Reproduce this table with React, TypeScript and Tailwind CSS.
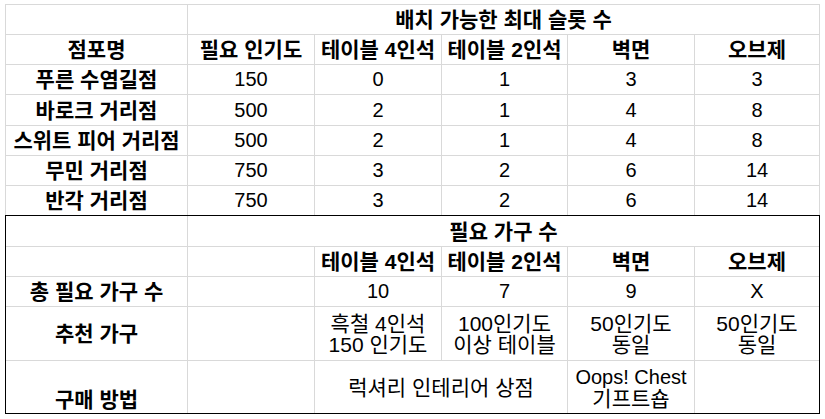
import type { ReactNode } from "react";

const COLS = "grid-cols-[181px_126px_126px_125px_126px_124px]";

const STORES = [
  { name: "푸른 수염길점", pop: 150, t4: 0, t2: 1, wall: 3, obj: 3 },
  { name: "바로크 거리점", pop: 500, t4: 2, t2: 1, wall: 4, obj: 8 },
  { name: "스위트 피어 거리점", pop: 500, t4: 2, t2: 1, wall: 4, obj: 8 },
  { name: "무민 거리점", pop: 750, t4: 3, t2: 2, wall: 6, obj: 14 },
  { name: "반각 거리점", pop: 750, t4: 3, t2: 2, wall: 6, obj: 14 },
];

const FURNITURE = ["테이블 4인석", "테이블 2인석", "벽면", "오브제"];

function Cell({
  children,
  bold,
  span,
  bottom,
  latin,
}: {
  children?: ReactNode;
  bold?: boolean;
  span?: string;
  bottom?: boolean;
  latin?: boolean;
}) {
  // hangul from the CJK font reads a bit small, so latin-only cells get 20px
  const small = latin || typeof children === "number";
  return (
    <div
      className={`bg-white flex justify-center text-center leading-[21px] ${
        bottom ? "items-end pb-[3px]" : "items-center"
      } ${small ? "text-[20px]" : ""} ${bold ? "font-bold" : ""} ${span ?? ""}`}
    >
      {children}
    </div>
  );
}

export default function App() {
  return (
    <div className="min-h-[419px] w-[825px] bg-white pt-1 pl-[5px] text-[21px] text-black font-['Liberation_Sans','Noto_Sans_CJK_KR',sans-serif]">
      {/* slots per store */}
      <div
        className={`grid ${COLS} grid-rows-[29px_29px_29px_30px_29px_29px_29px] gap-px w-fit bg-[#d9d9d9] border border-b-0 border-[#d9d9d9]`}
      >
        <Cell />
        <Cell bold span="col-span-5">
          배치 가능한 최대 슬롯 수
        </Cell>
        <Cell bold>점포명</Cell>
        <Cell bold>필요 인기도</Cell>
        {FURNITURE.map((f) => (
          <Cell key={f} bold>
            {f}
          </Cell>
        ))}
        {STORES.map((s) => (
          <div key={s.name} className="contents">
            <Cell bold>{s.name}</Cell>
            <Cell>{s.pop}</Cell>
            <Cell>{s.t4}</Cell>
            <Cell>{s.t2}</Cell>
            <Cell>{s.wall}</Cell>
            <Cell>{s.obj}</Cell>
          </div>
        ))}
      </div>

      {/* required furniture */}
      <div
        className={`grid ${COLS} grid-rows-[30px_29px_29px_53px_52px] gap-px w-fit bg-[#d9d9d9] border border-black`}
      >
        <Cell />
        <Cell bold span="col-span-5">
          필요 가구 수
        </Cell>
        <Cell />
        <Cell />
        {FURNITURE.map((f) => (
          <Cell key={f} bold>
            {f}
          </Cell>
        ))}
        <Cell bold>총 필요 가구 수</Cell>
        <Cell />
        <Cell>{10}</Cell>
        <Cell>{7}</Cell>
        <Cell>{9}</Cell>
        <Cell latin>X</Cell>
        <Cell bold>추천 가구</Cell>
        <Cell />
        <Cell>
          흑철 4인석
          <br />
          150 인기도
        </Cell>
        <Cell>
          100인기도
          <br />
          이상 테이블
        </Cell>
        <Cell>
          50인기도
          <br />
          동일
        </Cell>
        <Cell>
          50인기도
          <br />
          동일
        </Cell>
        <Cell bold bottom>
          구매 방법
        </Cell>
        <Cell />
        <Cell span="col-span-2">럭셔리 인테리어 상점</Cell>
        <Cell>
          <span>
            <span className="text-[20px]">Oops! Chest</span>
            <br />
            기프트숍
          </span>
        </Cell>
        <Cell />
      </div>
    </div>
  );
}
